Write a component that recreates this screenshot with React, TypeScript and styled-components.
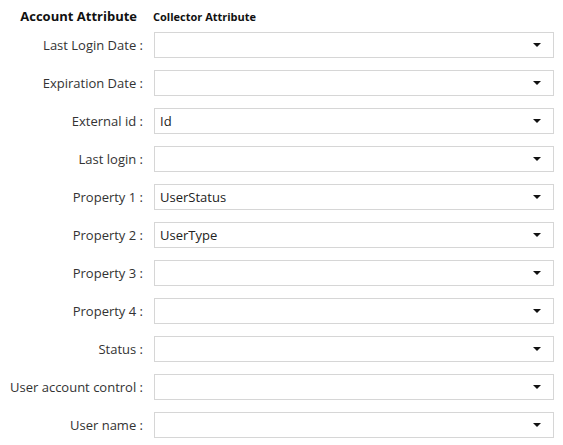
import React from 'react'
import styled, { createGlobalStyle } from 'styled-components'

const GlobalStyle = createGlobalStyle`
  body {
    margin: 0;
    background: #ffffff;
    font-family: "Open Sans", "Liberation Sans", sans-serif;
    color: #333333;
  }
`

const Form = styled.div`
  display: grid;
  grid-template-columns: 146px 400px;
  column-gap: 8px;
  row-gap: 12px;
  padding: 6px 0 0 0;
  width: 563px;
`

const HeaderCell = styled.div`
  font-weight: 700;
  font-size: 13px;
  color: #111111;
  text-align: right;
  padding-right: 9px;
  line-height: 20px;
  margin-bottom: -7px;
`

const SubHeader = styled.div`
  font-weight: 700;
  font-size: 11px;
  color: #111111;
  line-height: 20px;
  padding-top: 1px;
  margin-left: -1px;
  margin-bottom: -7px;
`

const Label = styled.label`
  font-size: 13px;
  text-align: right;
  line-height: 26px;
  padding-right: 3px;
  color: #333333;
  white-space: nowrap;
`

const Select = styled.div`
  box-sizing: border-box;
  height: 26px;
  border: 1px solid #d6d6d6;
  display: flex;
  align-items: center;
  padding: 0 12px 0 5px;
  font-size: 13px;
  color: #222222;
`

const Value = styled.span`
  flex: 1;
`

const Caret = styled.span`
  width: 0;
  height: 0;
  border-left: 4px solid transparent;
  border-right: 4px solid transparent;
  border-top: 4px solid #111111;
`

const rows: { label: string; value?: string }[] = [
  { label: 'Last Login Date' },
  { label: 'Expiration Date' },
  { label: 'External id', value: 'Id' },
  { label: 'Last login' },
  { label: 'Property 1', value: 'UserStatus' },
  { label: 'Property 2', value: 'UserType' },
  { label: 'Property 3' },
  { label: 'Property 4' },
  { label: 'Status' },
  { label: 'User account control' },
  { label: 'User name' },
]

export default function App() {
  return (
    <>
      <GlobalStyle />
      <Form>
        <HeaderCell>Account Attribute</HeaderCell>
        <SubHeader>Collector Attribute</SubHeader>
        {rows.map(row => (
          <React.Fragment key={row.label}>
            <Label>{row.label} :</Label>
            <Select>
              <Value>{row.value || ''}</Value>
              <Caret />
            </Select>
          </React.Fragment>
        ))}
      </Form>
    </>
  )
}
